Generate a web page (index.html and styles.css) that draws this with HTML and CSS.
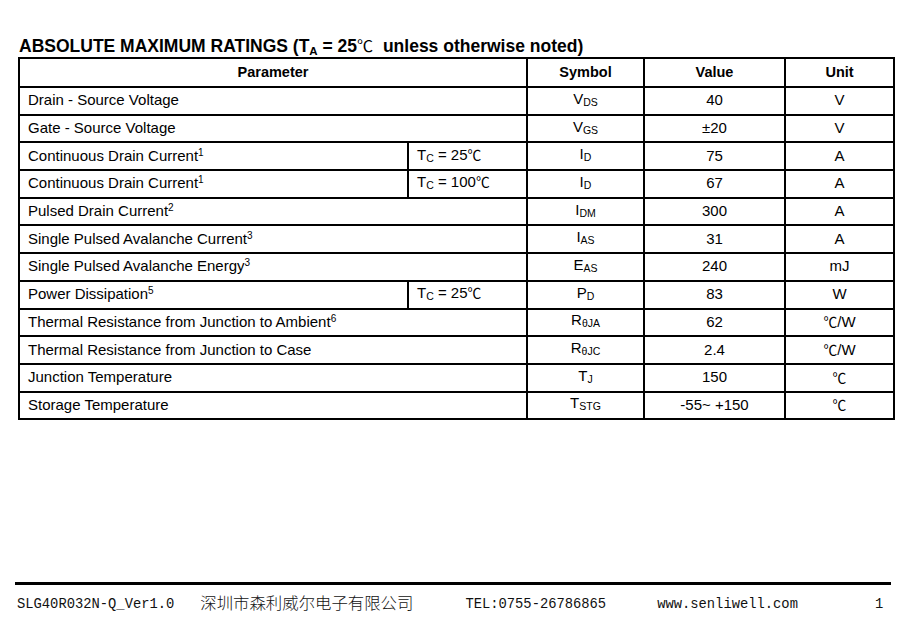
FILE: index.html
```html
<!DOCTYPE html>
<html>
<head>
<meta charset="utf-8">
<link rel="stylesheet" href="styles.css">
</head>
<body>
<div class="page">
  <h1 class="title">ABSOLUTE MAXIMUM RATINGS (T<span class="tsub">A</span> = 25<span class="deg">℃</span>&nbsp; unless otherwise noted)</h1>
  <table class="ratings">
    <colgroup>
      <col class="c1"><col class="c2"><col class="c3"><col class="c4"><col class="c5">
    </colgroup>
    <thead>
      <tr class="head"><th colspan="2">Parameter</th><th>Symbol</th><th>Value</th><th>Unit</th></tr>
    </thead>
    <tbody>
      <tr><td class="p" colspan="2">Drain - Source Voltage</td><td>V<span class="sub">DS</span></td><td>40</td><td>V</td></tr>
      <tr><td class="p" colspan="2">Gate - Source Voltage</td><td>V<span class="sub">GS</span></td><td>±20</td><td>V</td></tr>
      <tr><td class="p">Continuous Drain Current<sup class="sup">1</sup></td><td class="p">T<span class="sub">C</span> = 25<span class="deg">℃</span></td><td>I<span class="sub">D</span></td><td>75</td><td>A</td></tr>
      <tr><td class="p">Continuous Drain Current<sup class="sup">1</sup></td><td class="p">T<span class="sub">C</span> = 100<span class="deg">℃</span></td><td>I<span class="sub">D</span></td><td>67</td><td>A</td></tr>
      <tr><td class="p" colspan="2">Pulsed Drain Current<sup class="sup">2</sup></td><td>I<span class="sub">DM</span></td><td>300</td><td>A</td></tr>
      <tr><td class="p" colspan="2">Single Pulsed Avalanche Current<sup class="sup">3</sup></td><td>I<span class="sub">AS</span></td><td>31</td><td>A</td></tr>
      <tr><td class="p" colspan="2">Single Pulsed Avalanche Energy<sup class="sup">3</sup></td><td>E<span class="sub">AS</span></td><td>240</td><td>mJ</td></tr>
      <tr><td class="p">Power Dissipation<sup class="sup">5</sup></td><td class="p">T<span class="sub">C</span> = 25<span class="deg">℃</span></td><td>P<span class="sub">D</span></td><td>83</td><td>W</td></tr>
      <tr><td class="p" colspan="2">Thermal Resistance from Junction to Ambient<sup class="sup">6</sup></td><td>R<span class="sub">θJA</span></td><td>62</td><td><span class="deg">℃</span>/W</td></tr>
      <tr><td class="p" colspan="2">Thermal Resistance from Junction to Case</td><td>R<span class="sub">θJC</span></td><td>2.4</td><td><span class="deg">℃</span>/W</td></tr>
      <tr><td class="p" colspan="2">Junction Temperature</td><td>T<span class="sub">J</span></td><td>150</td><td><span class="deg">℃</span></td></tr>
      <tr><td class="p" colspan="2">Storage Temperature</td><td>T<span class="sub">STG</span></td><td>-55~ +150</td><td><span class="deg">℃</span></td></tr>
    </tbody>
  </table>
  <footer class="footer">
    <span class="f-doc">SLG40R032N-Q_Ver1.0</span>
    <span class="f-co">深圳市森利威尔电子有限公司</span>
    <span class="f-tel">TEL:0755-26786865</span>
    <span class="f-web">www.senliwell.com</span>
    <span class="f-page">1</span>
  </footer>
</div>
</body>
</html>
```

FILE: styles.css
```css
* { box-sizing: border-box; }
html, body { margin: 0; padding: 0; background: #fff; }
body {
  font-family: "Liberation Sans", Arial, sans-serif;
  color: #000;
}
.page {
  width: 897px;
  height: 631px;
  display: flex;
  flex-direction: column;
}
.title {
  margin: 34px 0 0 19px;
  font-size: 17.5px;
  font-weight: bold;
  line-height: 22px;
  height: 23px;
  white-space: nowrap;
}
.tsub { font-size: 11.5px; vertical-align: -3px; }
.deg {
  font-family: "Noto Sans CJK SC", sans-serif;
  font-weight: normal;
  font-size: 0.92em;
}
.ratings {
  margin-left: 18px;
  width: 875px;
  border-collapse: collapse;
  table-layout: fixed;
  font-size: 15px;
}
.c1 { width: 389px; }
.c2 { width: 119px; }
.c3 { width: 117px; }
.c4 { width: 141px; }
.c5 { width: 109px; }
.ratings th, .ratings td {
  border: 2px solid #000;
  text-align: center;
  vertical-align: middle;
  padding: 0 8px 1px 8px;
  line-height: 16px;
  white-space: nowrap;
}
.ratings tr { height: 27.7px; }
.ratings tr.head { height: 29px; }
.ratings th { font-weight: bold; font-size: 14.5px; }
.ratings td.p { text-align: left; }
.sub { font-size: 10.5px; vertical-align: -2px; }
.sup { font-size: 10px; vertical-align: 5px; line-height: 0; }
.footer {
  margin: auto 6px 0 15px;
  border-top: 3px solid #000;
  height: 49px;
  display: flex;
  align-items: flex-start;
  padding-top: 10px;
  font-family: "Liberation Mono", monospace;
  font-size: 13.8px;
  color: #111;
  white-space: nowrap;
}
.footer span { line-height: 20px; }
.f-doc { margin-left: 2px; }
.f-co {
  font-family: "Noto Sans CJK SC", sans-serif;
  font-size: 16.4px;
  margin-left: 26px;
  margin-top: -3px;
  font-weight: 300;
}
.f-tel { margin-left: 52px; }
.f-web { margin-left: 51px; }
.f-page { margin-left: 77px; }
```
